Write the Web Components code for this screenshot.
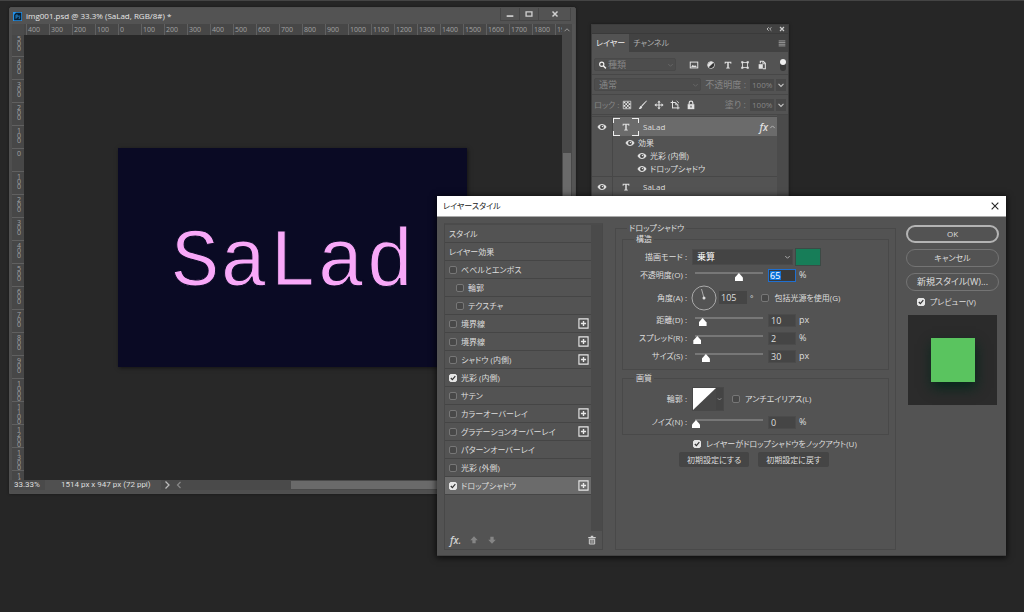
<!DOCTYPE html>
<html lang="ja">
<head>
<meta charset="utf-8">
<title>img001.psd</title>
<style>
html,body{margin:0;height:100%;background:#262626;overflow:hidden}
body{font:9px/12px "Open Sans","Noto Sans CJK JP",sans-serif;font-feature-settings:"palt";color:#dedede}
</style>
</head>
<body>
<ps-desktop>
  <document-window slot="window"></document-window>
  <layers-panel slot="window"></layers-panel>
  <layer-style-dialog slot="window"></layer-style-dialog>
</ps-desktop>
<script>
const BASE = `
:host{display:block;box-sizing:border-box}
*{box-sizing:border-box;margin:0}
button,input,select{font:inherit;font-feature-settings:inherit;color:inherit;padding:0;border:0;background:none;border-radius:0;outline:0;min-width:0}
input[type=checkbox]{appearance:none;flex:none;width:8px;height:8px;border:1px solid #777;border-radius:2px;background:#484848}
input[type=checkbox]:checked{border-color:#e6e6e6;background:#e6e6e6 url("data:image/svg+xml,%3Csvg xmlns='http://www.w3.org/2000/svg' viewBox='0 0 6 6'%3E%3Cpath d='M.8 3l1.6 1.7L5.3 1.2' fill='none' stroke='%23333' stroke-width='1.2'/%3E%3C/svg%3E") center/6px 6px no-repeat}
`;
const define = (tag, css, html) => customElements.define(tag, class extends HTMLElement {
  connectedCallback() {
    if (this.shadowRoot) return;
    const t = document.createElement('template');
    t.innerHTML = `<style>${BASE}${css}</style>${typeof html === 'function' ? html(this) : html}`;
    this.attachShadow({ mode: 'open' }).append(t.content.cloneNode(true));
  }
});

const ICONS = {
  eye: '<path d="M.5 6C2 3.4 3.900 2.500 6 2.500S10 3.400 11.500 6C10 8.600 8.100 9.500 6 9.500S2 8.600.500 6z" fill="currentColor"/><circle cx="6" cy="6" r="2.300" fill="#444"/><circle cx="6.500" cy="5.500" r=".900" fill="currentColor"/>',
  type: '<path d="M2 2h8v2.600H9.100L8.600 3.300H6.900v5.800l1.300.300v.800H3.800v-.800l1.300-.300V3.300H3.400L2.900 4.600H2z" fill="currentColor"/>',
  search: '<circle cx="5" cy="5" r="2.800" fill="none" stroke="currentColor" stroke-width="1.500"/><path d="M7 7l3.500 3.500" stroke="currentColor" stroke-width="1.900"/>',
  image: '<rect x="1.500" y="2.500" width="9" height="7" fill="none" stroke="currentColor" stroke-width="1.200"/><path d="M2.500 8.500l2-2.800 1.500 1.600 1.500-1 2 2.200z" fill="currentColor"/>',
  adjust: '<circle cx="6" cy="6" r="4" fill="none" stroke="currentColor" stroke-width="1.100"/><path d="M8.800 3.200a4 4 0 0 1-5.600 5.600z" fill="#333"/><path d="M3.200 8.800A4 4 0 0 1 8.800 3.200z" fill="currentColor"/>',
  shape: '<path d="M3 3h6v6H3z" fill="none" stroke="currentColor"/><path d="M1.500 1.500h2.500v2.500H1.500zM8 1.500h2.500v2.500H8zM1.500 8h2.500v2.500H1.500zM8 8h2.500v2.500H8z" fill="currentColor"/>',
  smart: '<path d="M4 4V1.500h3.500L10 4v6.500H7" fill="none" stroke="currentColor" stroke-width="1.300"/><path d="M2 5h5v5.500H2z" fill="currentColor"/><path d="M7 1.500V4.500h3" fill="none" stroke="currentColor"/>',
  checker: '<path d="M1.500 1.500h9v9h-9z" fill="none" stroke="currentColor" stroke-width=".900"/><path d="M2 2h2v2H2zM6 2h2v2H6zM4 4h2v2H4zM8 4h2v2H8zM2 6h2v2H2zM6 6h2v2H6zM4 8h2v2H4zM8 8h2v2H8z" fill="currentColor"/>',
  brush: '<path d="M11 .800L5.200 7.500 4 6.500 9.800.800z" fill="currentColor"/><path d="M3.800 6.800l1.400 1.300C4.800 10.300 3 11 .800 10.800 2 10 1.800 7.200 3.800 6.800z" fill="currentColor"/>',
  move: '<path d="M6 2v8M2 6h8" stroke="currentColor" stroke-width="1.300"/><path d="M6 .500L8 3H4zM6 11.500L4 9h4zM.500 6L3 4v4zM11.500 6L9 8V4z" fill="currentColor"/>',
  artboard: '<path d="M3 .800v9.200M.800 3h6L9.500 5.700v5.500M3 9.500h8.500" fill="none" stroke="currentColor" stroke-width="1.200"/><path d="M6.800 3v2.700h2.700M8 1l2.800 2.800" fill="none" stroke="currentColor"/>',
  lock: '<rect x="2" y="5" width="8" height="6" fill="currentColor"/><path d="M3.800 5V3.500a2.200 2.200 0 0 1 4.400 0V5" fill="none" stroke="currentColor" stroke-width="1.400"/><path d="M6 7v2" stroke="#444" stroke-width="1.300"/>',
  down: '<path d="M3 4.700l3 3 3-3" fill="none" stroke="currentColor" stroke-width="1.300"/>',
  up: '<path d="M3 7.500l3-3 3 3" fill="none" stroke="currentColor" stroke-width="1.200"/>',
  right: '<path d="M4.500 2.500L8 6 4.500 9.500" fill="none" stroke="currentColor" stroke-width="1.300"/>',
  left: '<path d="M7.500 3L4.500 6l3 3" fill="none" stroke="currentColor" stroke-width="1.200"/>',
  collapse: '<path d="M5.500 3.500L3 6l2.500 2.500M9.500 3.500L7 6l2.500 2.500" fill="none" stroke="currentColor" stroke-width="1.300"/>',
  cross: '<path d="M3 3l6 6M9 3L3 9" stroke="currentColor" stroke-width="1.800"/>',
  thin: '<path d="M2 2l8 8M10 2l-8 8" stroke="currentColor" stroke-width="1.300"/>',
  min: '<path d="M2 8.500h8" stroke="currentColor" stroke-width="2"/>',
  max: '<path d="M2.500 3.500h7v5h-7z" fill="none" stroke="currentColor" stroke-width="1.600"/>',
  menu: '<path d="M2 3.500h8M2 5.500h8M2 7.500h8M2 9.500h8" stroke="currentColor"/>',
  plus: '<path d="M1 1h10v10H1z" fill="none" stroke="currentColor" stroke-width="1.200"/><path d="M6 3.200v5.600M3.200 6h5.600" stroke="currentColor" stroke-width="1.500"/>',
  arrowup: '<path d="M6 1.500l4.500 4.700H8V10H4V6.200H1.500z" fill="currentColor"/>',
  arrowdown: '<path d="M6 10.500l4.500-4.700H8V2H4v3.800H1.500z" fill="currentColor"/>',
  trash: '<path d="M1.500 2.500h9V4h-9zM4.500 1h3v1.500h-3z" fill="currentColor"/><path d="M2.800 5h6.400v5.800H2.800z" fill="none" stroke="currentColor" stroke-width="1.200"/><path d="M4.900 5v5M7.100 5v5" stroke="currentColor"/>',
  ps: '<path d="M0 0h12v12H0z" fill="#2491e8"/><path d="M1.500 3.500L4 1h7v10H1.500z" fill="#061e33"/><path d="M4 9V4h1.500a1.300 1.300 0 0 1 0 2.700H4M9.500 5.500C7.500 5 7.300 6.500 8.500 7s1 2-1 1.500" fill="none" stroke="#31a8ff" stroke-width=".900"/>'
};
define('ps-icon', `:host{width:12px;height:12px;flex:none;display:inline-block}svg{display:block;width:100%;height:100%}`,
  h => `<svg viewBox="0 0 12 12" aria-hidden="true">${ICONS[h.getAttribute('name')]}</svg>`);

define('ps-desktop', `:host{position:relative;height:100vh;border-top:1px solid #444;overflow:hidden}`, `<slot name="window"></slot>`);

/* Ruler: one 23px cell per hundred image pixels */
const range = (from, to) => Array.from({ length: (to - from) / 100 + 1 }, (_, i) => Math.abs(from + i * 100));
define('ps-ruler', `
:host{overflow:hidden;background:#474747;color:#a2a2a2;font-size:7px;line-height:11px;min-width:0;min-height:0}
div{display:flex}
span{flex:none;width:23px;border-left:1px solid #606060;padding-left:1px;height:11px}
:host([vertical]){line-height:5px}
:host([vertical]) div{flex-direction:column;margin-top:-2px}
:host([vertical]) span{width:12px;height:23px;border-left:0;border-top:1px solid #606060;padding:2px 3px 0 5px;word-break:break-all}
`, h => `<div>${range(+h.getAttribute('from'), +h.getAttribute('to')).map(n => `<span>${n}</span>`).join('')}</div>`);

define('document-window', `
:host{position:absolute;top:6px;left:9px;right:448px;bottom:118px;background:#4f4f4f;border:1px solid #505050;border-radius:2px 2px 0 0;display:grid;
 grid-template:16px 11px 1fr 10px 3px / 2px 12px 1fr 13px;box-shadow:0 0 3px #0006}
header{grid-column:1/-1;display:flex;align-items:center;gap:4px;padding-left:3px;background:#535353;color:#e6e6e6;font-size:8px}
header ps-icon{width:9px;height:11px}
h1{font:inherit;flex:1;white-space:nowrap}
.win{display:flex;align-self:flex-start;color:#d0d0d0;margin-right:4px}
.win button{width:19px;height:13px;border:solid #464646;border-width:0 0 1px 1px;display:grid;place-items:center}
.win button:last-child{width:33px;border-right-width:1px}
.win ps-icon{width:10px;height:10px}
.corner{grid-area:2/2;background:#4b4b4b}
.h{grid-area:2/3;padding-left:2px}
.v{grid-area:3/2}
.canvas{grid-area:3/3;background:#282828;overflow:hidden;position:relative}
.art{position:absolute;left:94px;top:113px;width:349px;height:219px;background:#0a0a24;box-shadow:1px 1px 4px #0008;display:grid;place-items:center;
 font:81px/90px "Liberation Mono",monospace;color:#f8a8f8;-webkit-text-stroke:1px #0a0a24;padding-top:12px}
.scroll{grid-area:2/4/4/5;background:#484848;display:flex;flex-direction:column;border-right:3px solid #555}
.scroll ps-icon{width:10px;color:#999}
.scroll i{margin:117px 1px 0;height:140px;background:#6a6a6a}
footer{grid-area:4/1/5/5;display:flex;align-items:center;background:#4a4a4a;line-height:10px;font-family:Roboto,sans-serif;font-size:8px}
.zoom{width:35px;padding-left:4px;height:10px;font-size:8px}
.info{flex:none;width:116px;padding-left:16px;background:#505050;white-space:nowrap}
footer button{width:12px;height:10px;display:flex;align-items:center;justify-content:center;color:#bbb}
footer button:nth-of-type(2){color:#888}
footer i{flex:1;margin-left:106px;height:8px;background:#6a6a6a}
`, `
<header><ps-icon name="ps"></ps-icon><h1>img001.psd @ 33.3% (SaLad, RGB/8#) *</h1>
<div class="win"><button aria-label="最小化"><ps-icon name="min"></ps-icon></button><button aria-label="最大化"><ps-icon name="max"></ps-icon></button><button aria-label="閉じる"><ps-icon name="cross"></ps-icon></button></div></header>
<div class="corner"></div>
<ps-ruler class="h" from="-400" to="1900"></ps-ruler>
<ps-ruler class="v" vertical from="-500" to="1400"></ps-ruler>
<div class="canvas"><div class="art"><span>SaLad</span></div></div>
<div class="scroll"><ps-icon name="up"></ps-icon><i></i></div>
<footer><input class="zoom" value="33.33%" aria-label="ズーム"><span class="info">1514 px x 947 px (72 ppi)</span><button aria-label="情報"><ps-icon name="right"></ps-icon></button><button aria-label="左へ"><ps-icon name="left"></ps-icon></button><i></i></footer>`);

define('layer-row', `
:host{display:flex;height:20px;align-items:stretch;border-top:1px solid #474747;font-size:8px}
.vis{width:21px;display:grid;place-items:center;border-right:1px solid #474747}
.vis ps-icon{width:10px}
.main{flex:1;display:flex;align-items:center}
:host([selected]) .main{background:#6b6b6b}
.thumb{width:26px;height:18px;display:grid;place-items:center;margin-right:4px}
:host([selected]) .thumb{background:
 linear-gradient(#eee,#eee) 0 0/7px 1px,linear-gradient(#eee,#eee) 100% 0/7px 1px,linear-gradient(#eee,#eee) 0 100%/7px 1px,linear-gradient(#eee,#eee) 100% 100%/7px 1px,
 linear-gradient(#eee,#eee) 0 0/1px 5px,linear-gradient(#eee,#eee) 100% 0/1px 5px,linear-gradient(#eee,#eee) 0 100%/1px 5px,linear-gradient(#eee,#eee) 100% 100%/1px 5px;background-repeat:no-repeat}
.thumb ps-icon{width:10px;height:10px}
.name{flex:1}
`, `<button class="vis" aria-label="表示"><ps-icon name="eye"></ps-icon></button><div class="main"><span class="thumb"><ps-icon name="type"></ps-icon></span><span class="name"><slot></slot></span><slot name="end"></slot></div>`);

define('layers-panel', `
:host{position:absolute;top:23px;left:591px;right:235px;background:#535353;border:1px solid #3c3c3c;box-shadow:0 0 3px #0006}
.bar{height:8px;background:#424242;display:flex;justify-content:flex-end;gap:5px;padding-right:2px;color:#ccc}
.bar ps-icon{width:8px;height:8px}
.tabs{height:19px;background:#424242;display:flex;align-items:stretch;border-top:1px solid #3a3a3a;font-size:8px}
.tabs button{padding:0 4px;color:#b0b0b0}
.tabs button[aria-selected=true]{background:#535353;color:#eee}
.tabs ps-icon{margin:3px 1px 0 auto;width:10px;color:#aaa}
.row{display:flex;align-items:center;height:20px;border-bottom:1px solid #474747;padding:0 2px;color:#868686}
.row.first{height:23px;padding-top:3px}
.row>span{font-size:8px}
.sel{display:flex;align-items:center;height:13px;background:#4d4d4d;border:1px solid #494949;border-radius:2px;padding-left:3px}
.sel.kind{width:82px}.sel.mode{width:107px}
.sel select{appearance:none;flex:1;height:11px;line-height:10px;padding-left:1px}
.sel ps-icon[name=search]{color:#eee;width:9px}
.sel ps-icon[name=down]{width:9px;color:#666}
.icons{display:flex;gap:7px;color:#e2e2e2;margin-left:13px}
.icons.l{gap:6px;margin-left:3px}
.icons ps-icon{width:10px;height:10px}
.toggle{width:6px;height:12px;border-radius:3px;background:#383838;margin-left:auto;display:flex;align-items:flex-start}
.toggle::before{content:"";width:6px;height:6px;border-radius:3px;background:#eee}
.pct{display:flex;align-items:center;margin-left:auto;gap:4px}
.pct input{width:24px;height:12px;background:#484848;padding-left:2px;font-size:8px}
.pct button{width:10px;height:12px;background:#484848;margin-left:-2px;color:#c8c8c8}
.pct button ps-icon{width:10px}
.list{margin-right:11px;padding-top:1px}
.fx{display:flex;align-items:center;gap:3px;height:13px;border-left:1px solid #474747;margin-left:20px;font-size:8px}
.fx ps-icon{width:10px;height:10px}
.body{background:linear-gradient(#4b4b4b,#4b4b4b) right/11px 100% no-repeat}
em{font-size:10px;font-style:italic;font-weight:600}
.end{display:flex;align-items:center}
.end ps-icon{width:9px;color:#bbb}
.one{padding-left:12px}.two{padding-left:24px}
.last{height:14px}
`, `
<div class="bar"><ps-icon name="collapse"></ps-icon><ps-icon name="cross"></ps-icon></div>
<div class="tabs" role="tablist"><button role="tab" aria-selected="true">レイヤー</button><button role="tab">チャンネル</button><ps-icon name="menu"></ps-icon></div>
<div class="row first"><div class="sel kind"><ps-icon name="search"></ps-icon><select aria-label="フィルター"><option>種類</option></select><ps-icon name="down"></ps-icon></div>
<div class="icons"><ps-icon name="image"></ps-icon><ps-icon name="adjust"></ps-icon><ps-icon name="type"></ps-icon><ps-icon name="shape"></ps-icon><ps-icon name="smart"></ps-icon></div><button class="toggle" aria-label="フィルター切替"></button></div>
<div class="row"><div class="sel mode"><select aria-label="描画モード"><option>通常</option></select><ps-icon name="down"></ps-icon></div>
<div class="pct"><label for="o">不透明度 :</label><input id="o" value="100%"><button aria-label="不透明度を選択"><ps-icon name="down"></ps-icon></button></div></div>
<div class="row"><span>ロック :</span><div class="icons l"><ps-icon name="checker"></ps-icon><ps-icon name="brush"></ps-icon><ps-icon name="move"></ps-icon><ps-icon name="artboard"></ps-icon><ps-icon name="lock"></ps-icon></div>
<div class="pct"><label for="f">塗り :</label><input id="f" value="100%"><button aria-label="塗りを選択"><ps-icon name="down"></ps-icon></button></div></div>
<div class="body"><div class="list">
<layer-row selected>SaLad<span slot="end" class="end"><em>fx</em><ps-icon name="up"></ps-icon></span></layer-row>
<div class="fx one"><ps-icon name="eye"></ps-icon>効果</div><div class="fx two"><ps-icon name="eye"></ps-icon>光彩 (内側)</div><div class="fx two last"><ps-icon name="eye"></ps-icon>ドロップシャドウ</div>
<layer-row>SaLad</layer-row></div></div>`);

define('effect-row', `
:host{height:18px;border-bottom:1px solid #454545;font-size:8px}
div{display:flex;align-items:center;height:17px;padding:0 2px 0 4px}
label{display:flex;align-items:center;gap:4px;flex:1}
:host([sub]) label{padding-left:7px}
:host([selected]){background:#6b6b6b}
ps-icon{width:11px;height:11px;color:#e8e8e8}
`, h => `<div>${h.hasAttribute('head') ? '<span><slot></slot></span>' : `<label><input type="checkbox"${h.hasAttribute('checked') ? ' checked' : ''}><span><slot></slot></span></label>`}${h.hasAttribute('add') ? '<ps-icon name="plus"></ps-icon>' : ''}</div>`);

define('slider-row', `
:host{display:flex;align-items:center;height:18px}
label{width:64px;text-align:right;flex:none;white-space:nowrap}
input[type=range]{appearance:none;width:74px;height:16px;margin:0 2px 0 5px;background:linear-gradient(#777,#777) 3px 5px/68px 2px no-repeat}
input[type=range]::-webkit-slider-thumb{appearance:none;width:8px;height:8px;margin-top:4px;background:#fff;clip-path:polygon(50% 0,100% 55%,100% 100%,0 100%,0 55%)}
.n{width:28px;height:13px;background:#454545;border:1px solid #4b4b4b;padding-left:2px;margin-right:3px;font-size:9px}
span{font-size:9px}
:host([active]) .n{border-color:#1f6fd0;padding:0 13px 0 1px}
:host([active]) .n{background:linear-gradient(#0f74d8,#0f74d8) 1px 1px/11px 9px no-repeat,#3a3a3a;color:#fff}
`, h => { const a = n => h.getAttribute(n); return `<label for="n"><slot></slot></label><input type="range" min="0" max="${a('max')}" value="${a('value')}" aria-label="スライダー"><input class="n" id="n" value="${a('value')}"><span>${a('unit')}</span>`; });

define('layer-style-dialog', `
:host{position:absolute;top:195px;left:437px;right:18px;background:#535353;border-bottom:1px solid #444;box-shadow:0 1px 6px 1px #000a;font-size:8px}
header{background:#fff;color:#222;height:21px;display:flex;align-items:center;padding:0 6px;justify-content:space-between;border-bottom:1px solid #aaa}
h2{font:inherit}
header ps-icon{width:10px;height:10px;display:block}
.body{display:grid;grid-template-columns:161px 1fr 93px;padding:6px 7px 5px 7px;column-gap:10px}
.left{border:1px solid #484848;border-top:2px solid #4b4b4b;margin-right:2px}
.rows{margin-right:11px;padding-bottom:36px}
.track{background:linear-gradient(#4a4a4a,#4a4a4a) right/11px 100% no-repeat}
.tools{height:18px;display:flex;align-items:center;gap:8px;padding:0 5px;color:#d0d0d0}
.tools em{font-size:10px;font-style:italic;font-weight:600}
.tools ps-icon{width:10px;height:10px}
.tools .dim{color:#858585}
.tools ps-icon[name=trash]{margin-left:auto}
fieldset{border:1px solid #494949;padding:0;min-width:0}
legend{line-height:10px;margin-left:11px;padding:0 2px}
.main{padding:1px 6px 0}
.main>legend{margin-left:5px}
.a{padding:4px 0}.b{padding:4px 0 3px;margin-top:3px}
.line{display:flex;align-items:center;height:18px}
.line>.cap{width:64px;text-align:right;flex:none;margin-right:5px}
.combo{width:101px;height:16px;background:#444;display:flex;align-items:center;border:1px solid #4a4a4a}
.combo select{appearance:none;flex:1;padding-left:4px;height:14px;font-size:9px;color:#fff}
.combo ps-icon{width:9px;color:#aaa}
.swatch{width:26px;height:18px;background:#177d58;border:1px solid #3c4a45;margin-left:2px}
.angle{height:27px}
.dial{width:26px;height:26px;display:block;margin-left:-1px}
.num{width:28px;height:13px;background:#454545;padding-left:2px;margin:0 3px 0 2px;font-size:9px}
.check{display:flex;align-items:center;gap:5px}
.angle .check{margin-left:8px}
.contour{height:24px;margin-bottom:2px}
.contour button{width:32px;height:24px;display:flex;align-items:center;background:#444;border:1px solid #484848}
.contour button svg{width:23px;height:22px}
.contour button ps-icon{width:7px;color:#aaa}
.contour .check{margin-left:8px}
.knock{height:17px;padding-left:71px}
.btns{display:flex;gap:9px;padding-left:57px}
.btns button{height:15px;padding:0 8px;background:#454545;border-radius:2px;white-space:nowrap}
.right{display:flex;flex-direction:column;gap:6px;padding-top:2px}
.right>button{height:18px;border:1px solid #747474;border-radius:9px}
.right>button.ok{border:2px solid #b4b4b4}
.right .check{height:10px;padding-left:11px}
.right .wide{font-size:9px}
.preview{height:90px;background:#2b2b2b;margin:2px 2px 0;display:grid;place-items:center}
.preview i{width:44px;height:44px;background:#5ac45f;box-shadow:1px 6px 12px #06281c}
`, `
<header><h2>レイヤースタイル</h2><button aria-label="閉じる"><ps-icon name="thin"></ps-icon></button></header>
<div class="body">
<div class="left"><div class="track"><div class="rows">
<effect-row head>スタイル</effect-row><effect-row head>レイヤー効果</effect-row><effect-row>ベベルとエンボス</effect-row><effect-row sub>輪郭</effect-row><effect-row sub>テクスチャ</effect-row>
<effect-row add>境界線</effect-row><effect-row add>境界線</effect-row><effect-row add>シャドウ (内側)</effect-row><effect-row checked>光彩 (内側)</effect-row><effect-row>サテン</effect-row>
<effect-row add>カラーオーバーレイ</effect-row><effect-row add>グラデーションオーバーレイ</effect-row><effect-row>パターンオーバーレイ</effect-row><effect-row>光彩 (外側)</effect-row><effect-row checked selected add>ドロップシャドウ</effect-row>
</div></div>
<div class="tools"><em>fx.</em><ps-icon class="dim" name="arrowup"></ps-icon><ps-icon class="dim" name="arrowdown"></ps-icon><ps-icon name="trash"></ps-icon></div></div>
<fieldset class="main"><legend>ドロップシャドウ</legend>
<fieldset class="a"><legend>構造</legend>
<div class="line"><label class="cap" for="mode">描画モード :</label><div class="combo"><select id="mode"><option>乗算</option></select><ps-icon name="down"></ps-icon></div><button class="swatch" aria-label="シャドウのカラー"></button></div>
<slider-row active value="65" max="100" unit="%">不透明度(O) :</slider-row>
<div class="line angle"><label class="cap" for="ang">角度(A) :</label><svg class="dial" viewBox="0 0 26 26"><circle cx="13" cy="13" r="12" fill="none" stroke="#aaa"/><path d="M13 13L10.500 4" stroke="#aaa"/><circle cx="13" cy="13" r="1.500" fill="#ddd"/></svg><input class="num" id="ang" value="105"><span>°</span><label class="check"><input type="checkbox">包括光源を使用(G)</label></div>
<slider-row value="10" max="100" unit="px">距離(D) :</slider-row>
<slider-row value="2" max="100" unit="%">スプレッド(R) :</slider-row>
<slider-row value="30" max="200" unit="px">サイズ(S) :</slider-row>
</fieldset>
<fieldset class="b"><legend>画質</legend>
<div class="line contour"><span class="cap">輪郭 :</span><button aria-label="輪郭"><svg viewBox="0 0 23 22"><path d="M0 0h23v22H0z" fill="#484848"/><path d="M0 0h23L0 22z" fill="#fff"/></svg><ps-icon name="down"></ps-icon></button><label class="check"><input type="checkbox">アンチエイリアス(L)</label></div>
<slider-row value="0" max="100" unit="%">ノイズ(N) :</slider-row>
</fieldset>
<label class="check knock"><input type="checkbox" checked>レイヤーがドロップシャドウをノックアウト(U)</label>
<div class="btns"><button>初期設定にする</button><button>初期設定に戻す</button></div>
</fieldset>
<div class="right"><button class="ok">OK</button><button>キャンセル</button><button class="wide">新規スタイル(W)...</button><label class="check"><input type="checkbox" checked>プレビュー(V)</label><div class="preview"><i></i></div></div>
</div>`);
</script>
</body>
</html>
